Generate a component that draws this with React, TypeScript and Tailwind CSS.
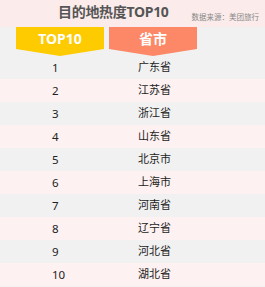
import React from "react";

const rows = [
  ["1", "广东省"],
  ["2", "江苏省"],
  ["3", "浙江省"],
  ["4", "山东省"],
  ["5", "北京市"],
  ["6", "上海市"],
  ["7", "河南省"],
  ["8", "辽宁省"],
  ["9", "河北省"],
  ["10", "湖北省"],
];

export default function App() {
  return (
    <div
      className="w-[265px] h-[287px] overflow-hidden bg-[#f1f1f1] flex flex-col"
      style={{ fontFamily: '"Noto Sans", "Noto Sans CJK SC", sans-serif' }}
    >
      <div className="h-[27px] shrink-0 bg-[#fbebeb] flex">
        <div className="ml-[58px] mt-[3px] text-[14px] leading-[18px] font-bold text-[#555555] tracking-[-0.3px]">
          目的地热度TOP10
        </div>
        <div className="ml-auto mr-[6px] mt-[12px] text-[7.5px] leading-[10px] text-[#888888]">
          数据来源：美团旅行
        </div>
      </div>
      <div className="h-[29px] shrink-0 flex">
        <div className="ml-[16px] w-[88px] h-[29px] bg-[#fecb00] [clip-path:polygon(0_0,100%_0,100%_76%,50%_100%,0_76%)] flex justify-center">
          <span className="mt-[3px] text-[14px] leading-[18px] font-bold text-white">TOP10</span>
        </div>
        <div className="ml-[5px] w-[88px] h-[29px] bg-[#fd8867] [clip-path:polygon(0_0,100%_0,100%_76%,50%_100%,0_76%)] flex justify-center">
          <span className="mt-[3px] text-[14px] leading-[18px] font-bold text-white">省市</span>
        </div>
      </div>
      {rows.map(([n, name], i) => (
        <div
          key={n}
          className={
            "h-[23px] shrink-0 flex items-center text-[11px] text-[#222222] " +
            (i % 2 === 0 ? "bg-[#f1f1f1]" : "bg-[#fdf1f1]")
          }
        >
          <span className="ml-[52px] w-[86px] text-[11.5px]">{n}</span>
          <span>{name}</span>
        </div>
      ))}
    </div>
  );
}
